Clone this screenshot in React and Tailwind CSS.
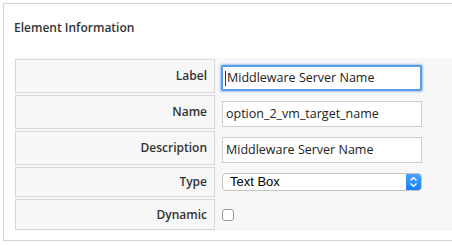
import React from "react";

const rows = [
  { label: "Label", h: "h-[34px]", kind: "focus", value: "Middleware Server Name" },
  { label: "Name", h: "h-[34px]", kind: "input", value: "option_2_vm_target_name" },
  { label: "Description", h: "h-[34px]", kind: "input", value: "Middleware Server Name" },
  { label: "Type", h: "h-[30px]", kind: "select", value: "Text Box" },
  { label: "Dynamic", h: "h-[31px]", kind: "check" },
];

const Field = ({ row }) => {
  if (row.kind === "focus") {
    return (
      <div className="h-[26px] w-[201px] mt-[6px] ml-[6px] rounded-[2px] border-2 border-[#5b9ce6] shadow-[0_0_2px_1px_#9cc4f2] bg-white flex items-center pl-[2px] text-[12.5px] text-[#222]">
        <span className="w-px h-[15px] bg-[#333] mr-px"></span>
        {row.value}
      </div>
    );
  }
  if (row.kind === "input") {
    return (
      <div className="h-[26px] w-[200px] mt-[6px] ml-[7px] border border-[#cfcfcf] bg-white flex items-center pl-[3px] text-[12.5px] text-[#222]">
        {row.value}
      </div>
    );
  }
  if (row.kind === "select") {
    return (
      <div className="h-[18px] w-[200px] mt-[6px] ml-[7px] flex rounded-[4px] border border-[#c4c4c4] bg-white overflow-hidden">
        <div className="flex-1 flex items-center pl-[7px] text-[13px] text-black" style={{ fontFamily: '"Liberation Sans", Arial, sans-serif' }}>
          {row.value}
        </div>
        <div className="w-[15px] bg-gradient-to-b from-[#4aa4fd] to-[#137ff5] flex items-center justify-center">
          <svg width="9" height="12" viewBox="0 0 9 12" fill="none" stroke="white" strokeWidth="1.4">
            <path d="M1.5 4.5 L4.5 1.8 L7.5 4.5" />
            <path d="M1.5 7.5 L4.5 10.2 L7.5 7.5" />
          </svg>
        </div>
      </div>
    );
  }
  return (
    <div className="w-[12px] h-[12px] mt-[10px] ml-[7px] rounded-[3px] border border-[#9a9a9a] bg-white"></div>
  );
};

export default function App() {
  return (
    <div className="w-[452px] h-[246px] overflow-hidden bg-white" style={{ fontFamily: '"Open Sans", sans-serif' }}>
      <div className="ml-[3px] mt-[3px] w-[470px] h-[238px] border border-[#d3d3d3] bg-white">
        <div className="pl-[10px] pt-[15px] h-[54px] text-[12px] font-semibold text-[#333]">
          Element Information
        </div>
        <div className="ml-[11px] bg-[#f7f7f7] pt-px pb-px flex flex-col gap-[2px]">
          {rows.map((row) => (
            <div key={row.label} className={`flex ${row.h}`}>
              <div className="w-[200px] h-full border border-[#d8d8d8] bg-[#f7f7f7] flex items-center justify-end pr-[7px] text-[12px] font-semibold text-[#333]">
                {row.label}
              </div>
              <div className="flex-1">
                <Field row={row} />
              </div>
            </div>
          ))}
        </div>
      </div>
    </div>
  );
}
